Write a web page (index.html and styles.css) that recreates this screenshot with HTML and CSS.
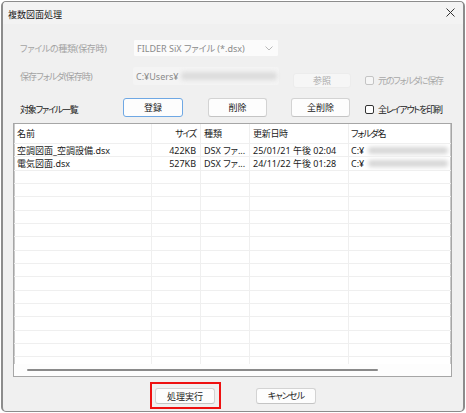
FILE: index.html
```html
<!DOCTYPE html>
<html lang="ja">
<head>
<meta charset="utf-8">
<link rel="stylesheet" href="styles.css">
</head>
<body>
<div class="window">
  <div class="titlebar">
    <span class="title">複数図面処理</span>
    <svg class="close" width="9" height="9" viewBox="0 0 9 9"><path d="M0.5 0.5L8.5 8.5M8.5 0.5L0.5 8.5" stroke="#333" stroke-width="1"/></svg>
  </div>
  <div class="content">
    <div class="row row1">
      <span class="label disabled k3">ファイルの種類(保存時)</span>
      <div class="combo">
        <span class="combo-text">FILDER SiX ファイル (*.dsx)</span>
        <svg class="chev" width="8" height="5" viewBox="0 0 8 5"><path d="M0.5 0.5L4 4L7.5 0.5" fill="none" stroke="#b8b8b8" stroke-width="1"/></svg>
      </div>
    </div>
    <div class="row row2">
      <span class="label disabled k2">保存フォルダ(保存時)</span>
      <div class="field">
        <span class="field-text">C:¥Users¥</span><span class="blur field-blur"></span>
      </div>
      <div class="btn btn-disabled btn-ref">参照</div>
      <label class="check check-disabled"><span class="box"></span><span class="k">元のフォルダに保存</span></label>
    </div>
    <div class="row row3">
      <span class="label label3 k">対象ファイル一覧</span>
      <div class="btn btn-default">登録</div>
      <div class="btn btn-del">削除</div>
      <div class="btn btn-alldel">全削除</div>
      <label class="check check3"><span class="box"></span><span class="k">全レイアウトを印刷</span></label>
    </div>
    <div class="list">
      <div class="lrow lhead">
        <div class="c c1">名前</div>
        <div class="c c2 r k">サイズ</div>
        <div class="c c3">種類</div>
        <div class="c c4 k3">更新日時</div>
        <div class="c c5 k">フォルダ名</div>
      </div>
      <div class="lbody">
        <div class="lrow">
          <div class="c c1">空調図面_空調設備.dsx</div>
          <div class="c c2 r">422KB</div>
          <div class="c c3">DSX ファ...</div>
          <div class="c c4">25/01/21 午後 02:04</div>
          <div class="c c5">C:¥<span class="blur row-blur"></span></div>
        </div>
        <div class="lrow">
          <div class="c c1">電気図面.dsx</div>
          <div class="c c2 r">527KB</div>
          <div class="c c3">DSX ファ...</div>
          <div class="c c4">24/11/22 午後 01:28</div>
          <div class="c c5">C:¥<span class="blur row-blur"></span></div>
        </div>
        <div class="lrow"><div class="c c1"></div><div class="c c2"></div><div class="c c3"></div><div class="c c4"></div><div class="c c5"></div></div>
        <div class="lrow"><div class="c c1"></div><div class="c c2"></div><div class="c c3"></div><div class="c c4"></div><div class="c c5"></div></div>
        <div class="lrow"><div class="c c1"></div><div class="c c2"></div><div class="c c3"></div><div class="c c4"></div><div class="c c5"></div></div>
        <div class="lrow"><div class="c c1"></div><div class="c c2"></div><div class="c c3"></div><div class="c c4"></div><div class="c c5"></div></div>
        <div class="lrow"><div class="c c1"></div><div class="c c2"></div><div class="c c3"></div><div class="c c4"></div><div class="c c5"></div></div>
        <div class="lrow"><div class="c c1"></div><div class="c c2"></div><div class="c c3"></div><div class="c c4"></div><div class="c c5"></div></div>
        <div class="lrow"><div class="c c1"></div><div class="c c2"></div><div class="c c3"></div><div class="c c4"></div><div class="c c5"></div></div>
        <div class="lrow"><div class="c c1"></div><div class="c c2"></div><div class="c c3"></div><div class="c c4"></div><div class="c c5"></div></div>
        <div class="lrow"><div class="c c1"></div><div class="c c2"></div><div class="c c3"></div><div class="c c4"></div><div class="c c5"></div></div>
        <div class="lrow"><div class="c c1"></div><div class="c c2"></div><div class="c c3"></div><div class="c c4"></div><div class="c c5"></div></div>
        <div class="lrow"><div class="c c1"></div><div class="c c2"></div><div class="c c3"></div><div class="c c4"></div><div class="c c5"></div></div>
        <div class="lrow"><div class="c c1"></div><div class="c c2"></div><div class="c c3"></div><div class="c c4"></div><div class="c c5"></div></div>
        <div class="lrow"><div class="c c1"></div><div class="c c2"></div><div class="c c3"></div><div class="c c4"></div><div class="c c5"></div></div>
        <div class="lrow"><div class="c c1"></div><div class="c c2"></div><div class="c c3"></div><div class="c c4"></div><div class="c c5"></div></div>
        <div class="lrow"><div class="c c1"></div><div class="c c2"></div><div class="c c3"></div><div class="c c4"></div><div class="c c5"></div></div>
      </div>
      <div class="hscroll"><div class="thumb"></div></div>
    </div>
    <div class="footer">
      <div class="highlight"><div class="btn btn-foot">処理実行</div></div>
      <div class="btn btn-foot k4">キャンセル</div>
    </div>
  </div>
</div>
</body>
</html>
```
FILE: styles.css
```css
html, body {
  margin: 0;
  padding: 0;
  background: #ffffff;
}
body {
  font-family: "Noto Sans", "Noto Sans CJK JP", sans-serif;
  font-size: 9px;
  color: #1a1a1a;
  font-feature-settings: "palt" 1;
}
.k {
  letter-spacing: -1.2px;
}
.k2 {
  letter-spacing: -0.9px;
}
.k3 {
  letter-spacing: -0.3px;
}
.k4 {
  letter-spacing: -0.9px;
}
.window {
  box-sizing: border-box;
  margin: 1px 0 0 1px;
  width: 464px;
  height: 411px;
  background: #f0f0f0;
  border: 1px solid #8c8c8c;
  border-left-width: 2px;
  border-right-width: 2px;
  border-radius: 5px;
  overflow: hidden;
  display: flex;
  flex-direction: column;
}
.titlebar {
  height: 22px;
  flex: none;
  display: flex;
  align-items: center;
  justify-content: space-between;
  padding: 0 8px 0 5px;
  background: #f3f3f3;
}
.title {
  color: #1a1a1a;
  font-size: 9px;
  margin-top: 2px;
}
.close {
  display: block;
  margin-top: -1px;
}
.content {
  flex: 1;
  display: flex;
  flex-direction: column;
  padding: 0 10px 0 10px;
}
.row {
  display: flex;
  align-items: center;
}
.label {
  padding-left: 7px;
  width: 120px;
  flex: none;
  box-sizing: border-box;
  white-space: nowrap;
}
.disabled {
  color: #a3a3a3;
}
.row1 {
  margin-top: 15px;
  height: 18px;
}
.combo {
  box-sizing: border-box;
  width: 146px;
  height: 18px;
  background: #fbfbfb;
  border: 1px solid #f0f0f0;
  border-radius: 2px;
  display: flex;
  align-items: center;
  justify-content: space-between;
  padding: 0 5px 0 3px;
}
.combo-text {
  color: #8a8a8a;
}
.chev {
  display: block;
}
.row2 {
  margin-top: 10px;
  height: 18px;
  align-items: flex-start;
}
.row2 .label {
  align-self: center;
}
.field {
  box-sizing: border-box;
  width: 146px;
  height: 18px;
  background: #f4f4f4;
  border-radius: 2px;
  display: flex;
  align-items: center;
  padding-left: 3px;
}
.field-text {
  color: #8a8a8a;
}
.blur {
  display: inline-block;
  background: #d6d6d6;
  filter: blur(2px);
  border-radius: 3px;
}
.field-blur {
  width: 96px;
  height: 8px;
  margin-left: 3px;
  background: #dcdcdc;
}
.btn {
  box-sizing: border-box;
  display: flex;
  align-items: center;
  justify-content: center;
  background: #fdfdfd;
  border: 1px solid #d3d3d3;
  border-bottom-color: #c4c4c4;
  border-radius: 3px;
  color: #1a1a1a;
  flex: none;
}
.btn-disabled {
  background: #f6f6f6;
  border-color: #ececec;
  color: #a8a8a8;
}
.btn-ref {
  width: 58px;
  height: 15px;
  margin-left: 14px;
  margin-top: 6px;
}
.check {
  display: flex;
  align-items: center;
  gap: 4px;
  flex: none;
}
.box {
  box-sizing: border-box;
  width: 9px;
  height: 9px;
  border: 1px solid #333;
  border-radius: 2px;
  background: #fff;
  display: block;
}
.check-disabled {
  color: #a8a8a8;
  margin-left: 14px;
  margin-top: 7px;
}
.check-disabled .box {
  border-color: #c4c4c4;
  background: #f6f6f6;
}
.row3 {
  margin-top: 13px;
  height: 19px;
}
.label3 {
  width: 110px;
  color: #1a1a1a;
  margin-top: 3px;
}
.row3 .btn {
  height: 19px;
}
.btn-default {
  width: 60px;
  border: 1px solid #6fa8e4;
}
.btn-del {
  width: 59px;
  margin-left: 25px;
}
.btn-alldel {
  width: 59px;
  margin-left: 24px;
}
.check3 {
  margin-left: 15px;
  margin-top: 3px;
}
.list {
  margin-top: 6px;
  box-sizing: border-box;
  width: 439px;
  height: 254px;
  background: #ffffff;
  border: 1px solid #a6a6a6;
  box-shadow: inset 1px 0 0 #c9c9c9, inset -1px 0 0 #c9c9c9;
  display: flex;
  flex-direction: column;
  overflow: hidden;
}
.lrow {
  display: grid;
  grid-template-columns: 138px 49px 49px 99px 1fr;
  height: 13.333px;
  box-sizing: border-box;
  border-bottom: 1px solid #efefef;
  flex: none;
}
.lhead {
  height: 20px;
  border-bottom: 1px solid #efefef;
}
.lbody {
  height: 220px;
  overflow: hidden;
  flex: none;
}
.c {
  box-sizing: border-box;
  border-right: 1px solid #efefef;
  padding: 0 3px;
  white-space: nowrap;
  overflow: hidden;
  display: flex;
  align-items: center;
  line-height: 1;
}
.c5 {
  border-right: none;
  padding-left: 2px;
}
.r {
  justify-content: flex-end;
  padding-right: 4px;
}
.row-blur {
  width: 84px;
  height: 7px;
  margin-left: 4px;
}
.hscroll {
  flex: 1;
  display: flex;
  align-items: center;
  padding-left: 13px;
  background: #fdfdfd;
}
.thumb {
  width: 351px;
  height: 2px;
  border-radius: 1px;
  background: #8a8a8a;
}
.footer {
  display: flex;
  justify-content: center;
  align-items: center;
  gap: 35px;
  margin-top: 5px;
}
.highlight {
  border: 2px solid #ee1111;
  padding: 4px 4px 3px 3px;
}
.btn-foot {
  width: 60px;
  height: 16px;
}
```
